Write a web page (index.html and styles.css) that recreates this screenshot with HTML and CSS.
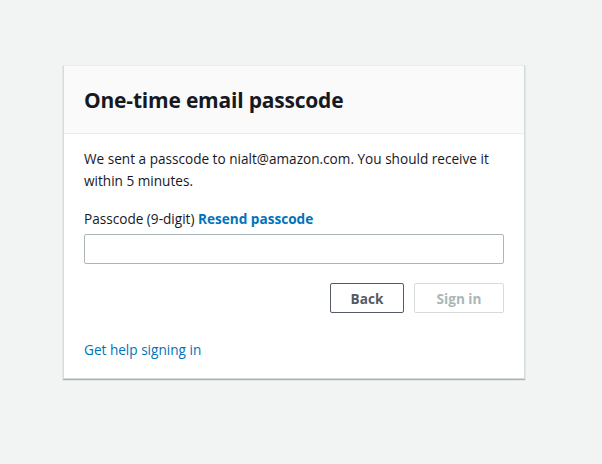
FILE: index.html
```html
<!DOCTYPE html>
<html>
<head>
<meta charset="utf-8">
<link rel="stylesheet" href="styles.css">
</head>
<body>
<div class="card">
  <div class="card-header"><h1>One-time email passcode</h1></div>
  <div class="card-body">
    <p class="msg">We sent a passcode to nialt@amazon.com. You should receive it within 5 minutes.</p>
    <label class="label">Passcode (9-digit) <a class="link bold">Resend passcode</a></label>
    <input class="input" type="text">
    <div class="actions">
      <button class="btn back">Back</button>
      <button class="btn signin" disabled>Sign in</button>
    </div>
    <a class="link help">Get help signing in</a>
  </div>
</div>
</body>
</html>
```

FILE: styles.css
```css
html, body { margin: 0; padding: 0; }
body {
  background: #f2f3f3;
  font-family: "Open Sans", "Liberation Sans", sans-serif;
  color: #16191f;
  padding-top: 65px;
  padding-left: 63px;
  height: 464px;
  box-sizing: border-box;
}
.card {
  width: 462px;
  background: #fff;
  border: 1px solid #d5dbdb;
  border-top-color: #eaeded;
  box-shadow: 0 1px 1px rgba(0,28,36,0.3);
  box-sizing: border-box;
}
.card-header {
  background: #fafafa;
  border-bottom: 1px solid #eaeded;
  height: 67px;
  display: flex;
  align-items: center;
  padding: 0 20px;
}
h1 { margin: 0; font-size: 21px; font-weight: 700; letter-spacing: -0.2px; }
.card-body { padding: 14px 20px 17px; display: flex; flex-direction: column; }
.msg { margin: 0; font-size: 13.6px; line-height: 22px; }
.label { margin-top: 16px; font-size: 13.6px; line-height: 22px; }
.link { color: #0073bb; text-decoration: none; font-size: 13.6px; }
.bold { font-weight: 700; }
.input {
  margin-top: 4px;
  height: 30px;
  border: 1px solid #aab7b8;
  border-radius: 2px;
  box-sizing: border-box;
  width: 100%;
}
.actions { display: flex; justify-content: flex-end; gap: 10px; margin-top: 19px; }
.btn {
  height: 30px;
  font-family: inherit;
  font-size: 13.6px;
  font-weight: 700;
  background: #fff;
  border-radius: 2px;
  box-sizing: border-box;
  padding: 0;
}
.back { width: 74px; border: 1px solid #545b64; color: #545b64; }
.signin { width: 90px; border: 1px solid #d5dbdb; color: #aab7b8; }
.help { margin-top: 26px; line-height: 22px; align-self: flex-start; }
```
